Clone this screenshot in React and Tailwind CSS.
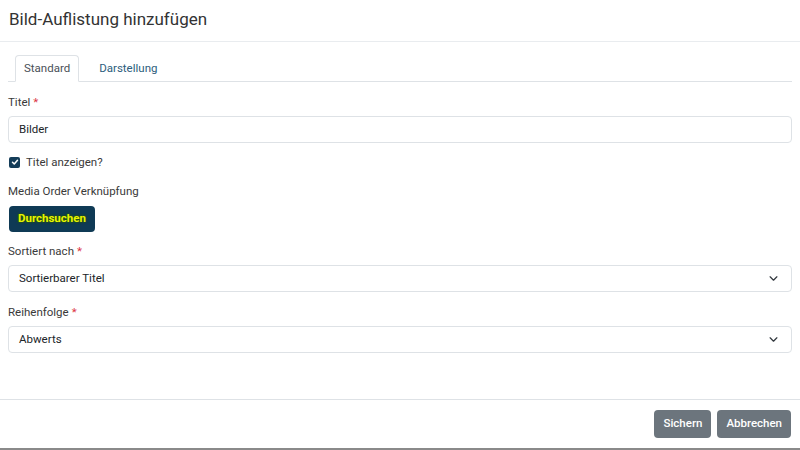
import React, { useState } from 'react';

function Chevron() {
  return (
    <svg width="9" height="9" viewBox="0 0 16 16" fill="none" stroke="#343a40" strokeWidth="2.2" strokeLinecap="round" strokeLinejoin="round">
      <path d="M2 5l6 6 6-6" />
    </svg>
  );
}

function Label({ text, required }) {
  return (
    <div className="text-[11.5px] text-[#3a3a3a] mb-[6px] leading-[16px]">
      {text}
      {required && <span className="text-[#dc3545] ml-[3px]">*</span>}
    </div>
  );
}

function Select({ value }) {
  return (
    <div className="h-[27px] border border-[#dee2e6] rounded-[4px] flex items-center justify-between pl-[10px] pr-[13px] text-[11.5px] text-[#212529] bg-white">
      <span>{value}</span>
      <Chevron />
    </div>
  );
}

export default function App() {
  const [tab, setTab] = useState('standard');
  const [showTitle, setShowTitle] = useState(true);

  return (
    <div className="w-[800px] h-[450px] bg-white flex flex-col font-['Roboto',sans-serif] overflow-hidden">
      {/* Header */}
      <div className="h-[42px] border-b border-[#e9ecef] flex items-center px-[9px] shrink-0">
        <h1 className="text-[17px] text-[#333] leading-none pb-[3px]">Bild-Auflistung hinzufügen</h1>
      </div>

      {/* Body */}
      <div className="flex-1 px-[8px] pt-[13px]">
        <div className="flex border-b border-[#dee2e6] pl-[7px] h-[27px]">
          <button
            onClick={() => setTab('standard')}
            className="h-[27px] px-[8px] text-[11.5px] text-[#495057] bg-white border border-[#dee2e6] border-b-white rounded-t-[4px] mb-[-1px]"
          >
            Standard
          </button>
          <button
            onClick={() => setTab('darstellung')}
            className="h-[27px] px-[20px] text-[11.5px] text-[#2c5d7c]"
          >
            Darstellung
          </button>
        </div>

        <div className="pt-[12px]">
          <Label text="Titel" required />
          <div className="h-[27px] border border-[#dee2e6] rounded-[4px] flex items-center pl-[10px] text-[11.5px] text-[#212529]">
            Bilder
          </div>

          <label className="flex items-center gap-[6px] mt-[11px] text-[11.5px] text-[#3a3a3a] leading-[16px]">
            <span
              onClick={() => setShowTitle(!showTitle)}
              className="w-[11px] h-[11px] ml-[1px] rounded-[2px] bg-[#143d59] flex items-center justify-center"
            >
              {showTitle && (
                <svg width="8" height="8" viewBox="0 0 16 16" fill="none" stroke="white" strokeWidth="3" strokeLinecap="round" strokeLinejoin="round">
                  <path d="M3 8.5l3.5 3.5L13 4.5" />
                </svg>
              )}
            </span>
            Titel anzeigen?
          </label>

          <div className="mt-[13px]">
            <Label text="Media Order Verknüpfung" />
          </div>
          <button className="ml-[1px] h-[26px] px-[9px] rounded-[4px] bg-[#0f3a55] text-[11.5px] font-bold text-[#e8f500] [text-shadow:0_0_3px_#2f5a00,0_0_2px_#2f5a00]">
            Durchsuchen
          </button>

          <div className="mt-[11px]">
            <Label text="Sortiert nach" required />
          </div>
          <Select value="Sortierbarer Titel" />

          <div className="mt-[12px]">
            <Label text="Reihenfolge" required />
          </div>
          <Select value="Abwerts" />
        </div>
      </div>

      {/* Footer */}
      <div className="h-[49px] border-t border-[#dee2e6] flex items-center justify-end gap-[6px] pr-[9px] shrink-0">
        <button className="h-[28px] px-[9px] rounded-[4px] bg-[#6c757d] text-white text-[11.5px] font-medium">Sichern</button>
        <button className="h-[28px] px-[9px] rounded-[4px] bg-[#6c757d] text-white text-[11.5px] font-medium">Abbrechen</button>
      </div>
      <div className="h-[2px] bg-[#8a8a8a] shrink-0" />
    </div>
  );
}
